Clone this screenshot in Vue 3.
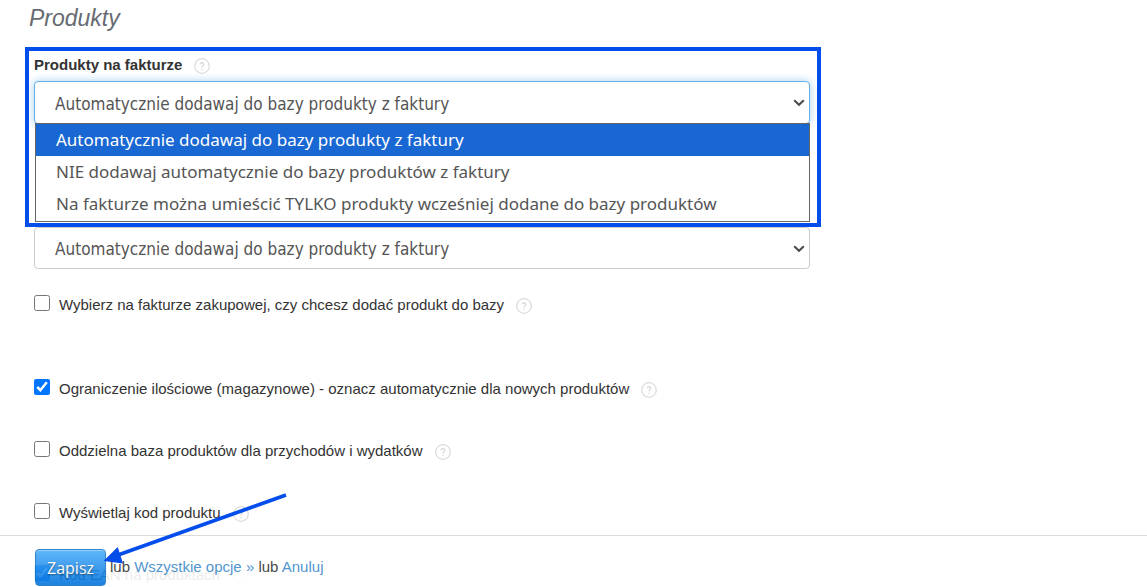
<script setup>
import { ref } from 'vue'

const modes = [
  'Automatycznie dodawaj do bazy produkty z faktury',
  'NIE dodawaj automatycznie do bazy produktów z faktury',
  'Na fakturze można umieścić TYLKO produkty wcześniej dodane do bazy produktów',
]
const invoiceMode = ref(modes[0])
const expenseMode = ref(modes[0])

const options = ref([
  { id: 'ask', label: 'Wybierz na fakturze zakupowej, czy chcesz dodać produkt do bazy', checked: false, spaced: true },
  { id: 'limit', label: 'Ograniczenie ilościowe (magazynowe) - oznacz automatycznie dla nowych produktów', checked: true },
  { id: 'separate', label: 'Oddzielna baza produktów dla przychodów i wydatków', checked: false },
  { id: 'code', label: 'Wyświetlaj kod produktu', checked: false },
  { id: 'ean', label: 'Kod EAN na produktach', checked: true },
])
</script>

<template>
  <div class="page">
    <svg class="symbols" aria-hidden="true">
      <symbol id="help" viewBox="0 0 16 16">
        <circle cx="8" cy="8" r="7.3" fill="none" stroke="#dcdcdc" stroke-width="1.3" />
        <path d="M6.2 6.3C6.2 4.2 9.8 4.2 9.8 6.3C9.8 7.7 8 7.7 8 9.4M8 10.7V12" fill="none" stroke="#dadada" stroke-width="1.3" />
      </symbol>
      <symbol id="chevron" viewBox="0 0 12 8">
        <path d="M1.2 1.2L6 5.8L10.8 1.2" fill="none" stroke="#4a4a4a" stroke-width="2" />
      </symbol>
    </svg>

    <main class="settings">
      <h2>Produkty</h2>

      <section class="field">
        <div class="caption">
          <label for="invoice-mode">Produkty na fakturze</label>
          <svg class="help"><use href="#help" /></svg>
        </div>
        <div class="picker">
          <select id="invoice-mode" v-model="invoiceMode" class="focused">
            <option v-for="m in modes" :key="m">{{ m }}</option>
          </select>
          <svg class="chevron"><use href="#chevron" /></svg>
          <ul class="menu" role="listbox" aria-label="Produkty na fakturze">
            <li
              v-for="m in modes"
              :key="m"
              role="option"
              :aria-selected="m === invoiceMode"
              :class="{ selected: m === invoiceMode }"
              @click="invoiceMode = m"
            >{{ m }}</li>
          </ul>
        </div>
        <div class="frame"></div>
      </section>

      <div class="picker">
        <select v-model="expenseMode" aria-label="Produkty na wydatkach">
          <option v-for="m in modes" :key="m">{{ m }}</option>
        </select>
        <svg class="chevron"><use href="#chevron" /></svg>
      </div>

      <div class="options">
        <div v-for="o in options" :key="o.id" class="option" :class="{ spaced: o.spaced }">
          <input :id="o.id" v-model="o.checked" type="checkbox" />
          <label :for="o.id">{{ o.label }}</label>
          <svg class="help"><use href="#help" /></svg>
        </div>
      </div>
    </main>

    <footer class="dock">
      <button type="button">Zapisz</button>
      <span>lub <a href="#">Wszystkie opcje »</a> lub <a href="#">Anuluj</a></span>
    </footer>
    <svg class="arrow" viewBox="0 0 190 72">
      <path d="M186 3L18 63" stroke="#034deb" stroke-width="3.6" />
      <path d="M3.5 69L17.7 55L23 71.5Z" fill="#034deb" />
    </svg>
  </div>
</template>

<style>
body {
  margin: 0;
  background: #fff;
}
</style>

<style scoped>
.page {
  position: relative;
  height: 100vh;
  overflow: hidden;
  box-sizing: border-box;
  font: 15px/20px "Liberation Sans", Arial, sans-serif;
  color: #333;
}
.symbols {
  position: absolute;
  width: 0;
  height: 0;
}
.settings {
  max-width: 776px;
  padding: 4px 34px 0;
}
h2 {
  margin: 0 0 23px -5px;
  font-size: 23px;
  line-height: 28px;
  font-weight: 400;
  font-style: italic;
  color: #686b72;
}
.field {
  position: relative;
  height: 172px;
}
.caption {
  display: flex;
  align-items: center;
  gap: 12px;
  height: 20px;
  margin-bottom: 6px;
  font-weight: 700;
}
.help {
  flex: none;
  width: 16px;
  height: 16px;
  margin-top: 2px;
}
.picker {
  position: relative;
}
select {
  display: block;
  width: 100%;
  height: 42px;
  box-sizing: border-box;
  padding: 2px 36px 0 20px;
  appearance: none;
  border: 1px solid #ccc;
  border-radius: 4px;
  background: #fff;
  font: 17px/32px "DejaVu Sans Condensed", Tahoma, sans-serif;
  color: #555;
  outline: none;
}
select.focused {
  height: 43px;
  border-color: #66afe9;
  box-shadow: 0 0 8px rgba(102, 175, 233, 0.6);
}
.chevron {
  position: absolute;
  right: 5px;
  top: 18px;
  width: 12px;
  height: 8px;
  pointer-events: none;
}
.menu {
  position: absolute;
  z-index: 1;
  top: 42px;
  left: 1px;
  right: 0;
  margin: 0;
  padding: 0 0 1px;
  list-style: none;
  border: 1px solid #666;
  background: #fff;
  font: 17px/32px "Noto Sans", Tahoma, sans-serif;
  color: #555;
}
.menu li {
  padding-left: 20px;
}
.menu .selected {
  background: #1967d2;
  color: #fff;
}
.frame {
  position: absolute;
  z-index: 2;
  top: -8px;
  bottom: 0;
  left: -9px;
  right: -11px;
  border: 4px solid #034deb;
  pointer-events: none;
}
.options {
  padding-top: 26px;
}
.option {
  display: flex;
  align-items: center;
  height: 20px;
  margin-bottom: 42px;
}
.option.spaced {
  margin-bottom: 64px;
}
.option input {
  flex: none;
  width: 16px;
  height: 16px;
  margin: 0 9px 4px 0;
}
.option .help {
  margin-left: 12px;
}
.dock {
  position: fixed;
  z-index: 3;
  left: 0;
  right: 0;
  bottom: 0;
  display: flex;
  align-items: flex-start;
  gap: 4px;
  height: 38px;
  padding: 13px 35px 0;
  border-top: 1px solid #d6d6d6;
  background: #fff;
  opacity: 0.9;
}
.dock span {
  padding-top: 8px;
}
.dock a {
  color: #428bca;
  text-decoration: none;
}
button {
  height: 37px;
  padding: 0 11px;
  border: 1px solid #1b78c8;
  border-radius: 4px;
  background: linear-gradient(#4fb0fc, #0674dc);
  box-shadow: inset 0 1px 0 rgba(255, 255, 255, 0.35);
  font: 16px/24px "Open Sans", sans-serif;
  color: #fff;
  text-shadow: 0 1px 2px rgba(0, 0, 0, 0.5);
}
.arrow {
  position: fixed;
  z-index: 4;
  left: 100px;
  bottom: 23px;
  width: 190px;
  height: 72px;
  pointer-events: none;
}
</style>
